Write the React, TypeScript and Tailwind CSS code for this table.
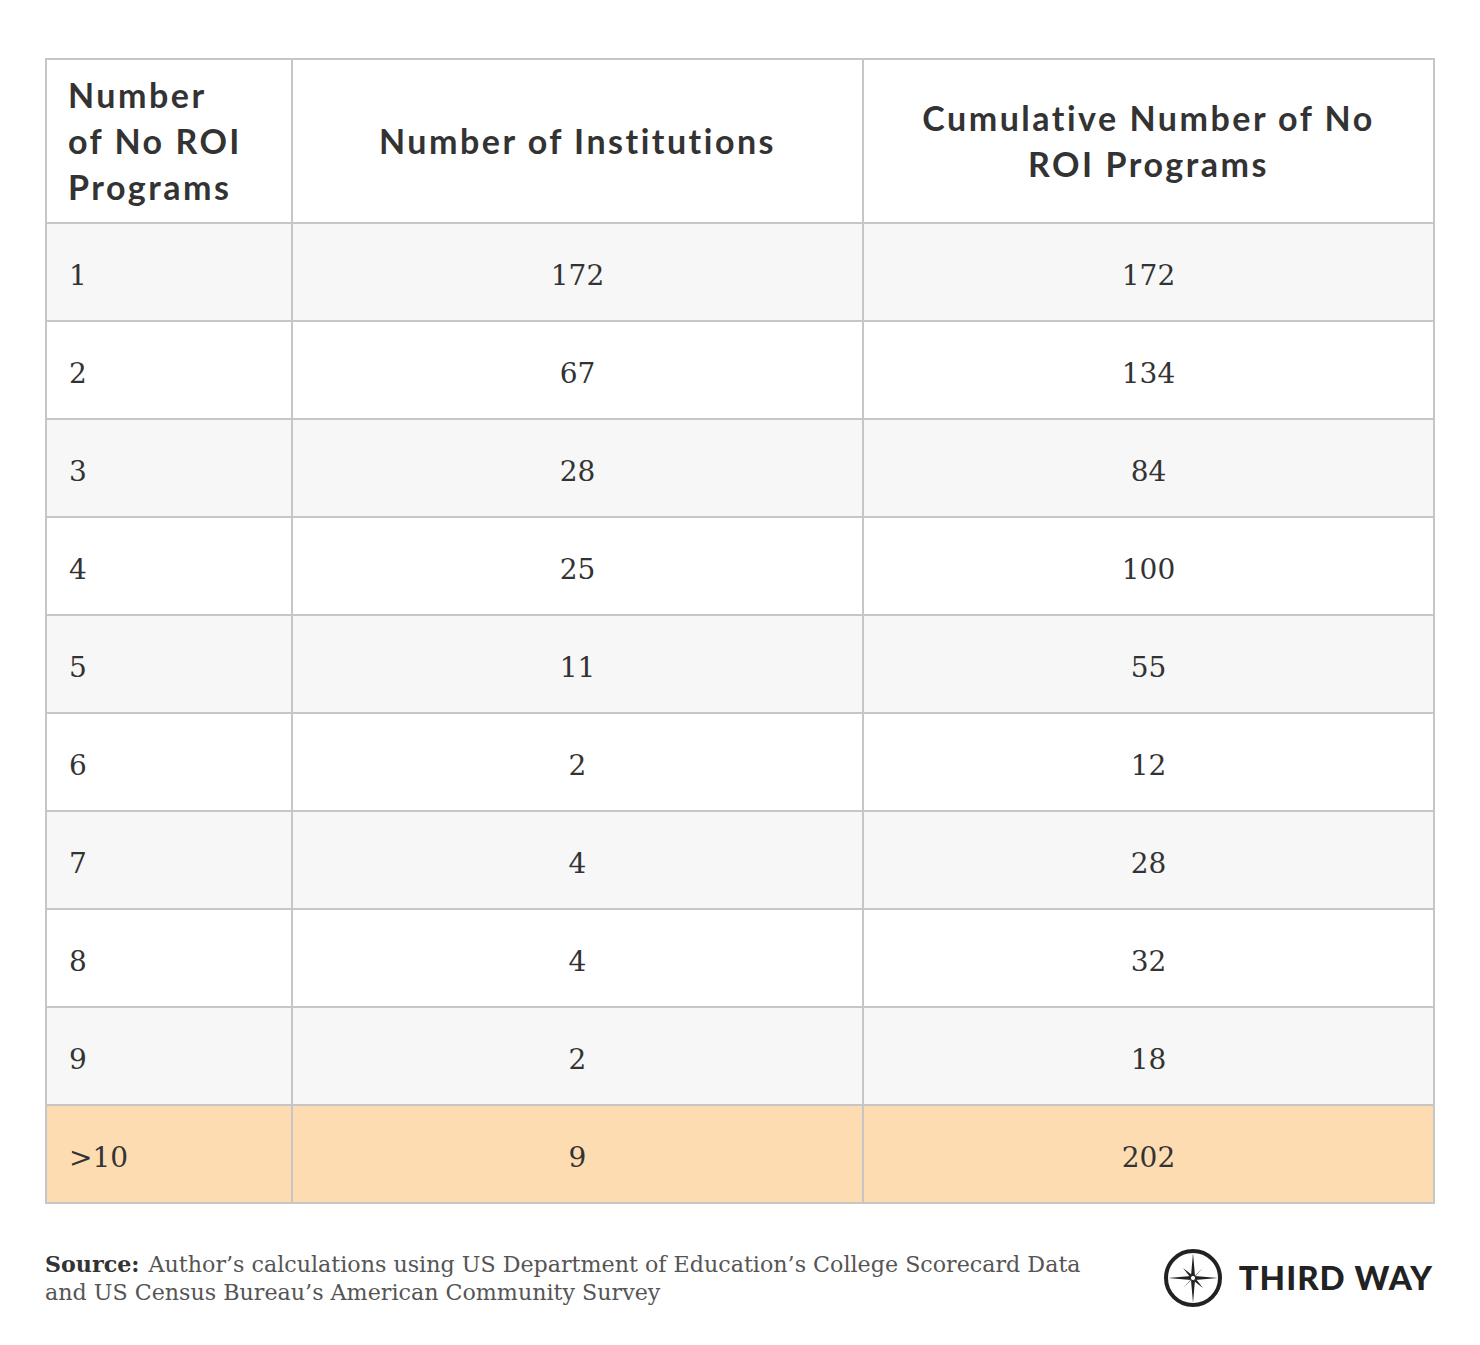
import React from "react";

const rows: [string, string, string][] = [
  ["1", "172", "172"],
  ["2", "67", "134"],
  ["3", "28", "84"],
  ["4", "25", "100"],
  ["5", "11", "55"],
  ["6", "2", "12"],
  ["7", "4", "28"],
  ["8", "4", "32"],
  ["9", "2", "18"],
];

const head = "font-['Lato',sans-serif] font-bold text-[34px] leading-[46px] text-[#333] tracking-[2.5px]";
const cell = "border-2 border-[#c6c6c6] font-['DejaVu_Serif',serif] text-[28px] text-[#333] h-[98px] align-middle pt-[8px]";

function Compass() {
  return (
    <svg width="60" height="60" viewBox="0 0 60 60">
      <circle cx="30" cy="30" r="27" fill="none" stroke="#222" strokeWidth="4" />
      <path d="M30 5 L32 28 L55 30 L32 32 L30 55 L28 32 L5 30 L28 28 Z" fill="#222" />
      <path d="M20 20 L31 28.5 L40 40 L29 31.5 Z M40 20 L31.5 29 L20 40 L28.5 31 Z" fill="#222" />
      <circle cx="30" cy="30" r="2.6" fill="#fff" stroke="#222" strokeWidth="1" />
    </svg>
  );
}

export default function App() {
  return (
    <div className="w-[1480px] h-[1345px] bg-white pt-[58px] px-[45px]">
      <table className="w-[1388px] border-collapse table-fixed">
        <colgroup>
          <col className="w-[246px]" />
          <col className="w-[571px]" />
          <col className="w-[571px]" />
        </colgroup>
        <thead>
          <tr className="h-[164px]">
            <th className={`border-2 border-[#c6c6c6] text-left pl-[21px] pr-1 align-middle ${head}`}>
              Number<br />of No ROI<br />Programs
            </th>
            <th className={`border-2 border-[#c6c6c6] text-center align-middle ${head}`}>
              Number of Institutions
            </th>
            <th className={`border-2 border-[#c6c6c6] text-center align-middle ${head}`}>
              Cumulative Number of No<br />ROI Programs
            </th>
          </tr>
        </thead>
        <tbody>
          {rows.map((r, i) => (
            <tr key={i} className={i % 2 === 0 ? "bg-[#f7f7f7]" : "bg-white"}>
              <td className={`${cell} text-left pl-[22px]`}>{r[0]}</td>
              <td className={`${cell} text-center`}>{r[1]}</td>
              <td className={`${cell} text-center`}>{r[2]}</td>
            </tr>
          ))}
          <tr className="bg-[#fddcb2]">
            <td className={`${cell} text-left pl-[22px]`}>&gt;10</td>
            <td className={`${cell} text-center`}>9</td>
            <td className={`${cell} text-center`}>202</td>
          </tr>
        </tbody>
      </table>
      <div className="flex items-center justify-between mt-[44px]">
        <p className="font-['DejaVu_Serif',serif] text-[22.2px] leading-[28px] text-[#555] w-[1070px]">
          <span className="font-bold text-[#333] mr-[2px]">Source:</span>{" "}
          Author’s calculations using US Department of Education’s College Scorecard Data and US Census Bureau’s American Community Survey
        </p>
        <div className="flex items-center gap-[16px] mr-[2px]">
          <Compass />
          <span className="font-['Lato',sans-serif] font-black text-[33px] text-[#222] tracking-[1px]">THIRD WAY</span>
        </div>
      </div>
    </div>
  );
}
